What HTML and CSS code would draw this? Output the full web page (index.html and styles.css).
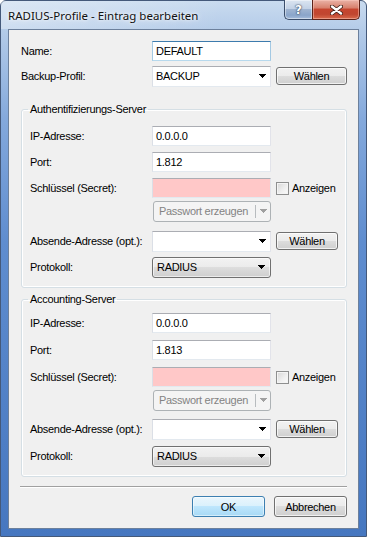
FILE: index.html
```html
<!DOCTYPE html>
<html lang="de">
<head>
    <meta charset="UTF-8">
    <title>RADIUS-Profile - Eintrag bearbeiten</title>
    <link rel="stylesheet" href="styles.css">
</head>
<body>
    <div class="window">
        <div class="titlebar">
            <span class="title">RADIUS-Profile - Eintrag bearbeiten</span>
            <div class="caption">
                <span class="cap-btn help">?</span>
                <span class="cap-btn close">
                    <svg width="13" height="10" viewBox="0 0 13 10">
                        <path d="M2 1.5L11 8.5M11 1.5L2 8.5" stroke="#3b1d16" stroke-width="4" stroke-linecap="round"/>
                        <path d="M2 1.5L11 8.5M11 1.5L2 8.5" stroke="#fff" stroke-width="2.4" stroke-linecap="round"/>
                    </svg>
                </span>
            </div>
        </div>

        <div class="client">
            <div class="row first">
                <label class="lbl">Name:</label>
                <div class="edit focus">DEFAULT</div>
            </div>
            <div class="row">
                <label class="lbl">Backup-Profil:</label>
                <div class="edit combo">BACKUP<svg class="arrow" width="7" height="4"><path d="M0 0h7v1h-1v1h-1v1h-1v1h-1v-1h-1v-1h-1v-1h-1z"/></svg></div>
                <button class="btn pick">Wählen</button>
            </div>

            <fieldset class="group auth">
                <legend>Authentifizierungs-Server</legend>
                <div class="row first">
                    <label class="lbl">IP-Adresse:</label>
                    <div class="edit">0.0.0.0</div>
                </div>
                <div class="row">
                    <label class="lbl">Port:</label>
                    <div class="edit">1.812</div>
                </div>
                <div class="row">
                    <label class="lbl">Schlüssel (Secret):</label>
                    <div class="edit secret"></div>
                    <span class="check"></span>
                    <span class="check-text">Anzeigen</span>
                </div>
                <div class="row sub">
                    <span class="lbl"></span>
                    <div class="split">
                        <span class="split-text">Passwort erzeugen</span>
                        <span class="split-arrow"><svg width="7" height="4"><path d="M0 0h7v1h-1v1h-1v1h-1v1h-1v-1h-1v-1h-1v-1h-1z"/></svg></span>
                    </div>
                </div>
                <div class="row wide">
                    <label class="lbl">Absende-Adresse (opt.):</label>
                    <div class="edit combo"><svg class="arrow" width="7" height="4"><path d="M0 0h7v1h-1v1h-1v1h-1v1h-1v-1h-1v-1h-1v-1h-1z"/></svg></div>
                    <button class="btn pick small">Wählen</button>
                </div>
                <div class="row">
                    <label class="lbl">Protokoll:</label>
                    <div class="dropdown">RADIUS<svg class="arrow" width="7" height="4"><path d="M0 0h7v1h-1v1h-1v1h-1v1h-1v-1h-1v-1h-1v-1h-1z"/></svg></div>
                </div>
            </fieldset>

            <fieldset class="group acct">
                <legend>Accounting-Server</legend>
                <div class="row first">
                    <label class="lbl">IP-Adresse:</label>
                    <div class="edit">0.0.0.0</div>
                </div>
                <div class="row">
                    <label class="lbl">Port:</label>
                    <div class="edit">1.813</div>
                </div>
                <div class="row">
                    <label class="lbl">Schlüssel (Secret):</label>
                    <div class="edit secret"></div>
                    <span class="check"></span>
                    <span class="check-text">Anzeigen</span>
                </div>
                <div class="row sub">
                    <span class="lbl"></span>
                    <div class="split">
                        <span class="split-text">Passwort erzeugen</span>
                        <span class="split-arrow"><svg width="7" height="4"><path d="M0 0h7v1h-1v1h-1v1h-1v1h-1v-1h-1v-1h-1v-1h-1z"/></svg></span>
                    </div>
                </div>
                <div class="row wide">
                    <label class="lbl">Absende-Adresse (opt.):</label>
                    <div class="edit combo"><svg class="arrow" width="7" height="4"><path d="M0 0h7v1h-1v1h-1v1h-1v1h-1v-1h-1v-1h-1v-1h-1z"/></svg></div>
                    <button class="btn pick small">Wählen</button>
                </div>
                <div class="row">
                    <label class="lbl">Protokoll:</label>
                    <div class="dropdown">RADIUS<svg class="arrow" width="7" height="4"><path d="M0 0h7v1h-1v1h-1v1h-1v1h-1v-1h-1v-1h-1v-1h-1z"/></svg></div>
                </div>
            </fieldset>

            <div class="separator"></div>

            <div class="actions">
                <button class="btn default">OK</button>
                <button class="btn">Abbrechen</button>
            </div>
        </div>
    </div>
</body>
</html>
```

FILE: styles.css
```css
body {
    margin: 0;
    background: #fff;
    font-family: 'Liberation Sans', Arial, sans-serif;
    font-size: 11px;
    letter-spacing: -0.3px;
    color: #000;
}

.window {
    width: 367px;
    height: 537px;
    box-sizing: border-box;
    padding: 0 7px 7px 7px;
    display: flex;
    flex-direction: column;
    border: 1px solid #44597a;
    border-radius: 6px 6px 0 0;
    background: linear-gradient(180deg, #c9dbef 0%, #b2cae8 6%, #84a9dc 22%, #5f8dcf 45%, #4677c0 100%);
}

/* title bar */

.titlebar {
    height: 28px;
    display: flex;
    justify-content: space-between;
    background: linear-gradient(100deg, rgba(255, 255, 255, 0.35) 0%, rgba(255, 255, 255, 0.1) 45%, rgba(255, 255, 255, 0) 60%);
    margin: 0 -7px;
    padding: 0 6px 0 7px;
}

.title {
    font-family: 'Noto Sans', sans-serif;
    font-size: 11.5px;
    letter-spacing: 0;
    line-height: 29px;
    color: #111;
    text-shadow: 0 0 6px rgba(255, 255, 255, 0.9), 0 0 3px rgba(255, 255, 255, 0.9);
}

.caption {
    display: flex;
    height: 20px;
    margin-top: -1px;
}

.cap-btn {
    height: 20px;
    box-sizing: border-box;
    display: flex;
    align-items: center;
    justify-content: center;
    border: 1px solid #3a4d6a;
    border-top: none;
}

.help {
    width: 28px;
    border-radius: 0 0 0 5px;
    border-right: none;
    background: linear-gradient(180deg, #dbe5f1 0%, #c3d2e6 45%, #9fb4d1 50%, #8aa5ca 80%, #a5bcdb 100%);
    color: #fff;
    font-family: 'DejaVu Sans', sans-serif;
    font-weight: bold;
    font-size: 12px;
    letter-spacing: 0;
    text-shadow: 0 0 2px #27374f, 0 0 1px #27374f;
    box-shadow: inset 0 0 0 1px rgba(255, 255, 255, 0.45);
}

.close {
    width: 48px;
    border-radius: 0 0 5px 0;
    border-color: #5c2219;
    background: linear-gradient(180deg, #eab3a7 0%, #d8826f 40%, #c5452f 50%, #c04630 75%, #d96b4d 100%);
    box-shadow: inset 0 0 0 1px rgba(255, 210, 200, 0.45);
}

/* client area */

.client {
    flex: 1;
    background: #f0f0f0;
    border: 1px solid #6c809c;
    padding: 11px 11px 0 12px;
}

.row {
    display: flex;
    align-items: center;
    height: 20px;
    margin-top: 5px;
}

.row.first {
    margin-top: 0;
}

.group .row {
    margin-top: 6px;
}

.group .row.first {
    margin-top: 0;
}

.group .row.sub {
    margin-top: 3px;
}

.group .row.wide {
    margin-top: 10px;
}

.acct .row {
    margin-top: 7px;
}

.acct .row.wide {
    margin-top: 9px;
}

.lbl {
    width: 131px;
    flex: none;
}

.group .lbl {
    width: 122px;
}

.edit {
    width: 119px;
    height: 20px;
    box-sizing: border-box;
    flex: none;
    display: flex;
    align-items: center;
    padding: 0 3px;
    background: #fff;
    border: 1px solid;
    border-color: #abadb3 #e2e3ea #e3e9ef #dbdfe6;
}

.edit.focus {
    border-color: #3d7bad #a4c9e3 #b7d9ed #a4c9e3;
}

.edit.secret {
    background: #ffc8c8;
}

.combo {
    height: 21px;
}

.arrow {
    flex: none;
    margin-left: auto;
    margin-right: 1px;
}

.dropdown {
    width: 119px;
    height: 21px;
    box-sizing: border-box;
    flex: none;
    display: flex;
    align-items: center;
    padding: 0 4px 0 4px;
    border: 1px solid #707070;
    border-radius: 3px;
    background: linear-gradient(180deg, #f2f2f2 0%, #ebebeb 50%, #dddddd 50%, #cfcfcf 100%);
    box-shadow: inset 0 0 0 1px rgba(255, 255, 255, 0.6);
}

.check {
    width: 13px;
    height: 13px;
    box-sizing: border-box;
    margin-left: 5px;
    border: 1px solid #8e8f8f;
    background: linear-gradient(135deg, #d6d6d6 0%, #f0f0f0 60%, #fbfbfb 100%);
    box-shadow: inset 0 0 0 1px #f4f4f4;
}

.check-text {
    margin-left: 3px;
}

.split {
    width: 118px;
    height: 21px;
    box-sizing: border-box;
    margin-left: 1px;
    display: flex;
    align-items: center;
    border: 1px solid #adb2b5;
    border-radius: 3px;
    background: #f4f4f4;
    color: #838383;
}

.split-text {
    flex: 1;
    padding-left: 5px;
}

.split-arrow {
    width: 14px;
    height: 13px;
    display: flex;
    align-items: center;
    justify-content: center;
    border-left: 1px solid #b8bcbf;
}

.split-arrow svg {
    fill: #a0a0a0;
}

/* buttons */

.btn {
    width: 73px;
    height: 21px;
    margin: 0;
    padding: 0;
    font-family: 'Liberation Sans', Arial, sans-serif;
    font-size: 11px;
    letter-spacing: -0.3px;
    color: #000;
    border: 1px solid #707070;
    border-radius: 3px;
    background: linear-gradient(180deg, #f2f2f2 0%, #ebebeb 50%, #dddddd 50%, #cfcfcf 100%);
    box-shadow: inset 0 0 0 1px rgba(255, 255, 255, 0.7);
}

.btn.pick {
    height: 18px;
    margin-left: 5px;
}

.btn.pick.small {
    width: 62px;
}

.btn.default {
    border-color: #3c7fb1;
    background: linear-gradient(180deg, #eaf6fd 0%, #d9f0fc 50%, #bee6fd 50%, #a7d9f5 100%);
    box-shadow: inset 0 0 0 1px rgba(255, 255, 255, 0.5);
}

/* group boxes */

.group {
    margin: 0;
    border: 1px solid #d5dfe5;
    border-radius: 3px;
    box-shadow: inset 0 0 0 1px #fff;
    padding: 0 0 10px 8px;
}

.group legend {
    padding: 0 2px;
    margin-left: -2px;
    line-height: 13px;
}

.group.auth {
    margin-top: 17px;
    padding-top: 10px;
}

.group.acct {
    margin-top: 5px;
    padding-top: 7px;
}

.separator {
    margin-top: 9px;
    height: 1px;
    border-top: 1px solid #a0a0a0;
    background: #fff;
    margin-left: -1px;
}

.actions {
    display: flex;
    justify-content: flex-end;
    gap: 9px;
    margin-top: 8px;
}
```
